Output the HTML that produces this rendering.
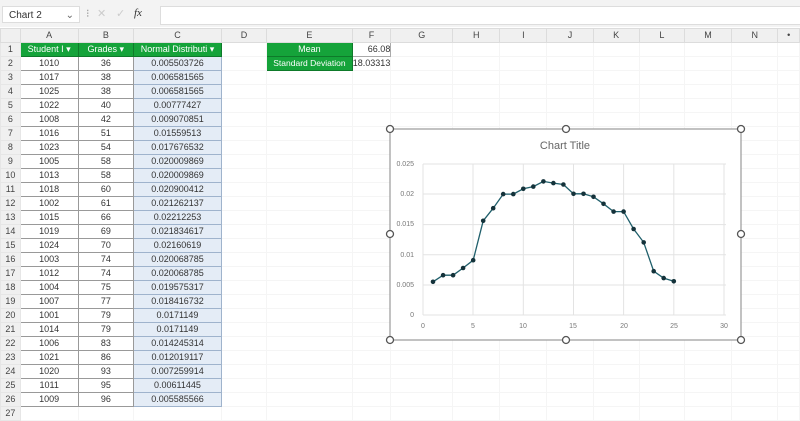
<!DOCTYPE html><html><head><meta charset="utf-8"><style>
body{margin:0;width:800px;height:418px;overflow:hidden;background:#fff;font-family:"Liberation Sans",sans-serif;position:relative}
.top{position:absolute;left:0;top:0;width:800px;height:27px;background:#f3f3f3}
.nb{position:absolute;left:2px;top:6px;width:78px;height:17px;background:#fff;border:1px solid #ddd;font-size:10px;line-height:17px;padding-left:6px;box-sizing:border-box;color:#333}
.fb{position:absolute;left:160px;top:6px;width:640px;height:17px;background:#fff;border:1px solid #ddd}
.ic{position:absolute;top:7px;font-size:11px;color:#999}
table{position:absolute;left:0;top:28px;border-collapse:collapse;table-layout:fixed;font-size:9px;color:#333}
td{height:13px;padding:0;text-align:center;white-space:nowrap;overflow:hidden;border:1px solid #f5f5f5;line-height:13px}
tr.h td{background:#f0f0f0;color:#444;height:12px;border-color:#dcdcdc}
td.r{background:#f0f0f0;color:#444;border-color:#e6e6e6}
td.g{background:#15a33a;color:#fff;border:1px solid #0e7a2a}
td.a,td.b{border:1px solid #999}
td.c{background:#e4ecf6;border:1px solid #9fb3cc}
</style></head><body>
<div class="top"><div class="nb">Chart 2<span style="position:absolute;right:5px;color:#666">⌄</span></div>
<span class="ic" style="left:86px">⁝</span><span class="ic" style="left:97px;color:#ccc">✕</span><span class="ic" style="left:116px;color:#ccc">✓</span><span class="ic" style="left:134px;font-style:italic;font-family:'Liberation Serif';color:#333">fx</span><div class="fb"></div></div>
<table>
<colgroup><col style="width:20px"><col style="width:58px"><col style="width:56px"><col style="width:88px"><col style="width:46px"><col style="width:86px"><col style="width:30px"><col style="width:63px"><col style="width:48px"><col style="width:48px"><col style="width:47px"><col style="width:47px"><col style="width:46px"><col style="width:48px"><col style="width:47px"><col style="width:22px"></colgroup>
<tr class="h"><td></td><td>A</td><td>B</td><td>C</td><td>D</td><td>E</td><td>F</td><td>G</td><td>H</td><td>I</td><td>J</td><td>K</td><td>L</td><td>M</td><td>N</td><td>•</td></tr>
<tr><td class="r">1</td><td class="g">Student I ▾</td><td class="g">Grades ▾</td><td class="g">Normal Distributi ▾</td><td></td><td class="g">Mean</td><td style="text-align:right;border:1px solid #aaa">66.08</td><td></td><td></td><td></td><td></td><td></td><td></td><td></td><td></td><td></td></tr>
<tr><td class="r">2</td><td class="a">1010</td><td class="b">36</td><td class="c">0.005503726</td><td></td><td class="g" style="font-size:8.5px">Standard Deviation</td><td style="border:1px dashed #888">18.03313</td><td></td><td></td><td></td><td></td><td></td><td></td><td></td><td></td><td></td></tr>
<tr><td class="r">3</td><td class="a">1017</td><td class="b">38</td><td class="c">0.006581565</td><td></td><td></td><td></td><td></td><td></td><td></td><td></td><td></td><td></td><td></td><td></td><td></td></tr>
<tr><td class="r">4</td><td class="a">1025</td><td class="b">38</td><td class="c">0.006581565</td><td></td><td></td><td></td><td></td><td></td><td></td><td></td><td></td><td></td><td></td><td></td><td></td></tr>
<tr><td class="r">5</td><td class="a">1022</td><td class="b">40</td><td class="c">0.00777427</td><td></td><td></td><td></td><td></td><td></td><td></td><td></td><td></td><td></td><td></td><td></td><td></td></tr>
<tr><td class="r">6</td><td class="a">1008</td><td class="b">42</td><td class="c">0.009070851</td><td></td><td></td><td></td><td></td><td></td><td></td><td></td><td></td><td></td><td></td><td></td><td></td></tr>
<tr><td class="r">7</td><td class="a">1016</td><td class="b">51</td><td class="c">0.01559513</td><td></td><td></td><td></td><td></td><td></td><td></td><td></td><td></td><td></td><td></td><td></td><td></td></tr>
<tr><td class="r">8</td><td class="a">1023</td><td class="b">54</td><td class="c">0.017676532</td><td></td><td></td><td></td><td></td><td></td><td></td><td></td><td></td><td></td><td></td><td></td><td></td></tr>
<tr><td class="r">9</td><td class="a">1005</td><td class="b">58</td><td class="c">0.020009869</td><td></td><td></td><td></td><td></td><td></td><td></td><td></td><td></td><td></td><td></td><td></td><td></td></tr>
<tr><td class="r">10</td><td class="a">1013</td><td class="b">58</td><td class="c">0.020009869</td><td></td><td></td><td></td><td></td><td></td><td></td><td></td><td></td><td></td><td></td><td></td><td></td></tr>
<tr><td class="r">11</td><td class="a">1018</td><td class="b">60</td><td class="c">0.020900412</td><td></td><td></td><td></td><td></td><td></td><td></td><td></td><td></td><td></td><td></td><td></td><td></td></tr>
<tr><td class="r">12</td><td class="a">1002</td><td class="b">61</td><td class="c">0.021262137</td><td></td><td></td><td></td><td></td><td></td><td></td><td></td><td></td><td></td><td></td><td></td><td></td></tr>
<tr><td class="r">13</td><td class="a">1015</td><td class="b">66</td><td class="c">0.02212253</td><td></td><td></td><td></td><td></td><td></td><td></td><td></td><td></td><td></td><td></td><td></td><td></td></tr>
<tr><td class="r">14</td><td class="a">1019</td><td class="b">69</td><td class="c">0.021834617</td><td></td><td></td><td></td><td></td><td></td><td></td><td></td><td></td><td></td><td></td><td></td><td></td></tr>
<tr><td class="r">15</td><td class="a">1024</td><td class="b">70</td><td class="c">0.02160619</td><td></td><td></td><td></td><td></td><td></td><td></td><td></td><td></td><td></td><td></td><td></td><td></td></tr>
<tr><td class="r">16</td><td class="a">1003</td><td class="b">74</td><td class="c">0.020068785</td><td></td><td></td><td></td><td></td><td></td><td></td><td></td><td></td><td></td><td></td><td></td><td></td></tr>
<tr><td class="r">17</td><td class="a">1012</td><td class="b">74</td><td class="c">0.020068785</td><td></td><td></td><td></td><td></td><td></td><td></td><td></td><td></td><td></td><td></td><td></td><td></td></tr>
<tr><td class="r">18</td><td class="a">1004</td><td class="b">75</td><td class="c">0.019575317</td><td></td><td></td><td></td><td></td><td></td><td></td><td></td><td></td><td></td><td></td><td></td><td></td></tr>
<tr><td class="r">19</td><td class="a">1007</td><td class="b">77</td><td class="c">0.018416732</td><td></td><td></td><td></td><td></td><td></td><td></td><td></td><td></td><td></td><td></td><td></td><td></td></tr>
<tr><td class="r">20</td><td class="a">1001</td><td class="b">79</td><td class="c">0.0171149</td><td></td><td></td><td></td><td></td><td></td><td></td><td></td><td></td><td></td><td></td><td></td><td></td></tr>
<tr><td class="r">21</td><td class="a">1014</td><td class="b">79</td><td class="c">0.0171149</td><td></td><td></td><td></td><td></td><td></td><td></td><td></td><td></td><td></td><td></td><td></td><td></td></tr>
<tr><td class="r">22</td><td class="a">1006</td><td class="b">83</td><td class="c">0.014245314</td><td></td><td></td><td></td><td></td><td></td><td></td><td></td><td></td><td></td><td></td><td></td><td></td></tr>
<tr><td class="r">23</td><td class="a">1021</td><td class="b">86</td><td class="c">0.012019117</td><td></td><td></td><td></td><td></td><td></td><td></td><td></td><td></td><td></td><td></td><td></td><td></td></tr>
<tr><td class="r">24</td><td class="a">1020</td><td class="b">93</td><td class="c">0.007259914</td><td></td><td></td><td></td><td></td><td></td><td></td><td></td><td></td><td></td><td></td><td></td><td></td></tr>
<tr><td class="r">25</td><td class="a">1011</td><td class="b">95</td><td class="c">0.00611445</td><td></td><td></td><td></td><td></td><td></td><td></td><td></td><td></td><td></td><td></td><td></td><td></td></tr>
<tr><td class="r">26</td><td class="a">1009</td><td class="b">96</td><td class="c">0.005585566</td><td></td><td></td><td></td><td></td><td></td><td></td><td></td><td></td><td></td><td></td><td></td><td></td></tr>
<tr><td class="r">27</td><td></td><td></td><td></td><td></td><td></td><td></td><td></td><td></td><td></td><td></td><td></td><td></td><td></td><td></td><td></td></tr>
</table>
<svg style="position:absolute;left:0;top:0" width="800" height="418" font-family="Liberation Sans" >
<rect x="390" y="129" width="351" height="211" fill="#fff" stroke="#999" stroke-width="1.2"/>
<text x="565" y="149" font-size="11" fill="#666" text-anchor="middle">Chart Title</text>
<g stroke="#e3e3e3" stroke-width="1">
<line x1="423" y1="164" x2="726" y2="164"/><line x1="423" y1="194" x2="726" y2="194"/><line x1="423" y1="224.6" x2="726" y2="224.6"/><line x1="423" y1="254.8" x2="726" y2="254.8"/><line x1="423" y1="285" x2="726" y2="285"/><line x1="423" y1="315" x2="726" y2="315"/>
<line x1="423" y1="164" x2="423" y2="315"/><line x1="473" y1="164" x2="473" y2="315"/><line x1="523.3" y1="164" x2="523.3" y2="315"/><line x1="573.5" y1="164" x2="573.5" y2="315"/><line x1="623.6" y1="164" x2="623.6" y2="315"/><line x1="673.8" y1="164" x2="673.8" y2="315"/><line x1="724" y1="164" x2="724" y2="315"/>
</g>
<g font-size="7" fill="#777" text-anchor="end">
<text x="414" y="166">0.025</text><text x="414" y="196">0.02</text><text x="414" y="226">0.015</text><text x="414" y="257">0.01</text><text x="414" y="287">0.005</text><text x="414" y="317">0</text></g>
<g font-size="7" fill="#777" text-anchor="middle">
<text x="423" y="328">0</text><text x="473" y="328">5</text><text x="523" y="328">10</text><text x="573" y="328">15</text><text x="624" y="328">20</text><text x="674" y="328">25</text><text x="724" y="328">30</text></g>
<polyline fill="none" stroke="#1f5f6b" stroke-width="1.3" points="433,281.8 443.1,275.2 453.1,275.2 463.1,268 473.2,260.2 483.2,220.8 493.2,208.2 503.2,194.1 513.3,194.1 523.3,188.8 533.3,186.6 543.4,181.4 553.4,183.1 563.4,184.5 573.5,193.8 583.5,193.8 593.5,196.8 603.5,203.8 613.6,211.6 623.6,211.6 633.6,229 643.7,242.4 653.7,271.2 663.7,278.1 673.8,281.3"/>
<g fill="#14323a">
<circle cx="433" cy="281.8" r="2.3"/><circle cx="443.1" cy="275.2" r="2.3"/><circle cx="453.1" cy="275.2" r="2.3"/><circle cx="463.1" cy="268" r="2.3"/><circle cx="473.2" cy="260.2" r="2.3"/><circle cx="483.2" cy="220.8" r="2.3"/><circle cx="493.2" cy="208.2" r="2.3"/><circle cx="503.2" cy="194.1" r="2.3"/><circle cx="513.3" cy="194.1" r="2.3"/><circle cx="523.3" cy="188.8" r="2.3"/><circle cx="533.3" cy="186.6" r="2.3"/><circle cx="543.4" cy="181.4" r="2.3"/><circle cx="553.4" cy="183.1" r="2.3"/><circle cx="563.4" cy="184.5" r="2.3"/><circle cx="573.5" cy="193.8" r="2.3"/><circle cx="583.5" cy="193.8" r="2.3"/><circle cx="593.5" cy="196.8" r="2.3"/><circle cx="603.5" cy="203.8" r="2.3"/><circle cx="613.6" cy="211.6" r="2.3"/><circle cx="623.6" cy="211.6" r="2.3"/><circle cx="633.6" cy="229" r="2.3"/><circle cx="643.7" cy="242.4" r="2.3"/><circle cx="653.7" cy="271.2" r="2.3"/><circle cx="663.7" cy="278.1" r="2.3"/><circle cx="673.8" cy="281.3" r="2.3"/></g>
<g fill="#fff" stroke="#555" stroke-width="1.3">
<circle cx="390" cy="129" r="3.5"/><circle cx="566" cy="129" r="3.5"/><circle cx="741" cy="129" r="3.5"/><circle cx="390" cy="234" r="3.5"/><circle cx="741" cy="234" r="3.5"/><circle cx="390" cy="340" r="3.5"/><circle cx="566" cy="340" r="3.5"/><circle cx="741" cy="340" r="3.5"/></g>
</svg>
</body></html>
